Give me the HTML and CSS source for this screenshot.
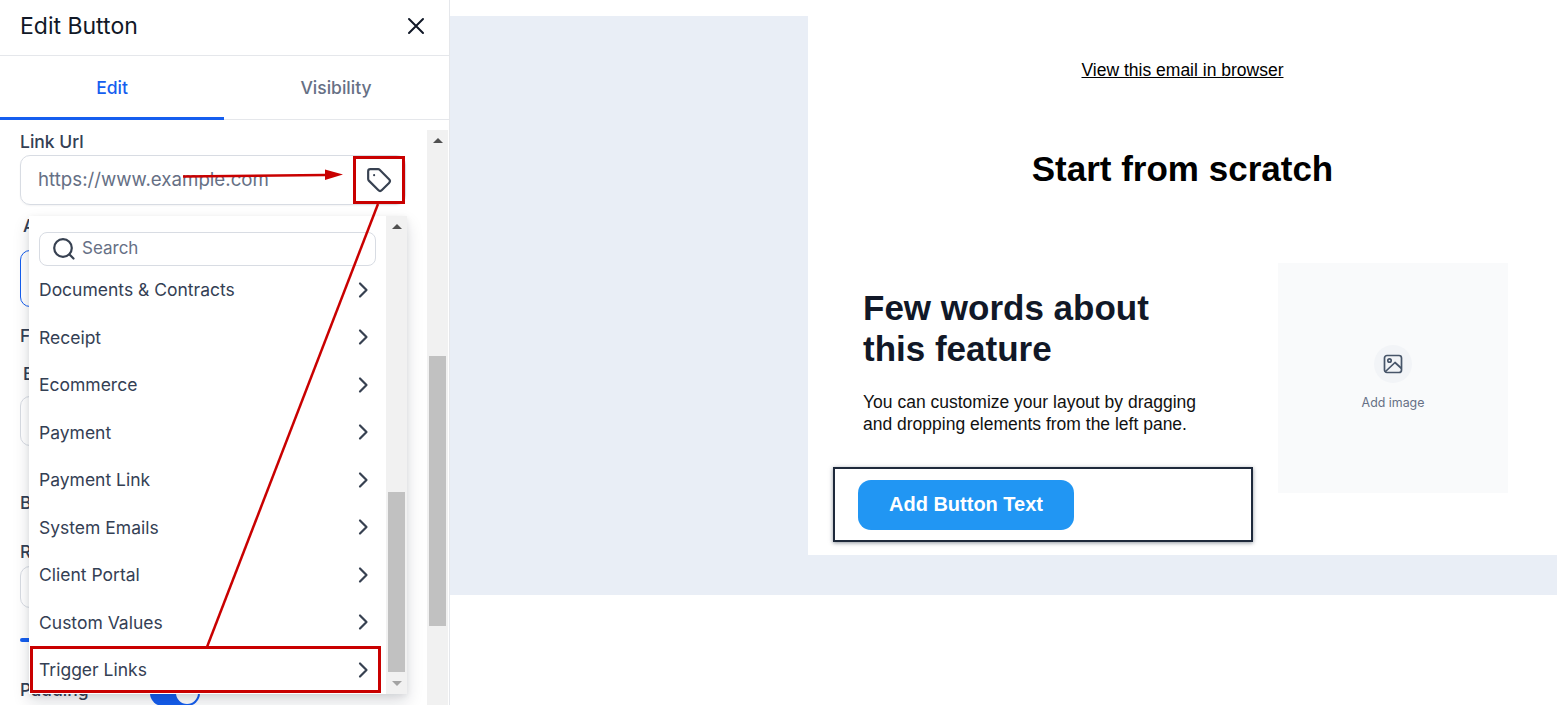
FILE: index.html
```html
<!DOCTYPE html>
<html lang="en">
<head>
<meta charset="utf-8">
<title>Edit Button</title>
<link rel="stylesheet" href="styles.css">
</head>
<body>
<div class="app">
  <aside class="panel">
    <header class="panel-head">
      <h1 class="panel-title">Edit Button</h1>
      <svg class="close" width="24" height="24" viewBox="0 0 24 24" fill="none" stroke="#111827" stroke-width="2" stroke-linecap="round"><path d="M5 5l14 14M19 5L5 19"/></svg>
    </header>
    <nav class="tabs">
      <div class="tab active">Edit</div>
      <div class="tab">Visibility</div>
    </nav>
    <div class="panel-body">
      <div class="form">
        <label class="label">Link Url</label>
        <div class="url-field">
          <span class="url-text">https://www.example.com</span>
          <span class="tag-cell">
            <svg width="26" height="26" viewBox="0 0 24 24" fill="none" stroke="#374151" stroke-width="2" stroke-linecap="round" stroke-linejoin="round"><path d="M12.586 2.586A2 2 0 0 0 11.172 2H4a2 2 0 0 0-2 2v7.172a2 2 0 0 0 .586 1.414l8.704 8.704a2.426 2.426 0 0 0 3.42 0l6.58-6.58a2.426 2.426 0 0 0 0-3.42z"/><circle cx="7.5" cy="7.5" r="1" fill="#374151" stroke="none"/></svg>
          </span>
        </div>
        <div class="ghost ghost-a">Action</div>
        <div class="ghost-box ghost-blue"></div>
        <div class="ghost ghost-f">Font</div>
        <div class="ghost ghost-e">Button</div>
        <div class="ghost-box ghost-input"></div>
        <div class="ghost ghost-b">Border</div>
        <div class="ghost ghost-r">Radius</div>
        <div class="ghost-box ghost-input2"></div>
        <div class="ghost-slider"></div>
        <div class="padding-row">
          <span class="ghost">Padding</span>
          <span class="toggle"><span class="knob"></span></span>
        </div>
      </div>
      <div class="scrollbar">
        <span class="arrow-up"></span>
        <span class="thumb"></span>
      </div>
    </div>
    <div class="menu">
      <div class="menu-list">
        <div class="search">
          <svg width="24" height="24" viewBox="0 0 24 24" fill="none" stroke="#374151" stroke-width="2.200" stroke-linecap="round"><circle cx="11" cy="11" r="8.800"/><path d="M21.500 21.500l-4-4"/></svg>
          <span class="search-text">Search</span>
        </div>
        <div class="item"><span>Documents &amp; Contracts</span><svg class="chev" width="24" height="24" viewBox="0 0 24 24" fill="none" stroke="#374151" stroke-width="2.200" stroke-linecap="round" stroke-linejoin="round"><path d="M9 5.500l6.500 6.500L9 18.500"/></svg></div>
        <div class="item"><span>Receipt</span><svg class="chev" width="24" height="24" viewBox="0 0 24 24" fill="none" stroke="#374151" stroke-width="2.200" stroke-linecap="round" stroke-linejoin="round"><path d="M9 5.500l6.500 6.500L9 18.500"/></svg></div>
        <div class="item"><span>Ecommerce</span><svg class="chev" width="24" height="24" viewBox="0 0 24 24" fill="none" stroke="#374151" stroke-width="2.200" stroke-linecap="round" stroke-linejoin="round"><path d="M9 5.500l6.500 6.500L9 18.500"/></svg></div>
        <div class="item"><span>Payment</span><svg class="chev" width="24" height="24" viewBox="0 0 24 24" fill="none" stroke="#374151" stroke-width="2.200" stroke-linecap="round" stroke-linejoin="round"><path d="M9 5.500l6.500 6.500L9 18.500"/></svg></div>
        <div class="item"><span>Payment Link</span><svg class="chev" width="24" height="24" viewBox="0 0 24 24" fill="none" stroke="#374151" stroke-width="2.200" stroke-linecap="round" stroke-linejoin="round"><path d="M9 5.500l6.500 6.500L9 18.500"/></svg></div>
        <div class="item"><span>System Emails</span><svg class="chev" width="24" height="24" viewBox="0 0 24 24" fill="none" stroke="#374151" stroke-width="2.200" stroke-linecap="round" stroke-linejoin="round"><path d="M9 5.500l6.500 6.500L9 18.500"/></svg></div>
        <div class="item"><span>Client Portal</span><svg class="chev" width="24" height="24" viewBox="0 0 24 24" fill="none" stroke="#374151" stroke-width="2.200" stroke-linecap="round" stroke-linejoin="round"><path d="M9 5.500l6.500 6.500L9 18.500"/></svg></div>
        <div class="item"><span>Custom Values</span><svg class="chev" width="24" height="24" viewBox="0 0 24 24" fill="none" stroke="#374151" stroke-width="2.200" stroke-linecap="round" stroke-linejoin="round"><path d="M9 5.500l6.500 6.500L9 18.500"/></svg></div>
        <div class="item"><span>Trigger Links</span><svg class="chev" width="24" height="24" viewBox="0 0 24 24" fill="none" stroke="#374151" stroke-width="2.200" stroke-linecap="round" stroke-linejoin="round"><path d="M9 5.500l6.500 6.500L9 18.500"/></svg></div>
      </div>
      <div class="menu-scroll">
        <span class="arrow-up"></span>
        <span class="menu-thumb"></span>
        <span class="arrow-down"></span>
      </div>
    </div>
  </aside>
  <main class="canvas">
    <div class="canvas-bg">
      <div class="email">
        <div class="view-link"><a href="#">View this email in browser</a></div>
        <h2 class="email-title">Start from scratch</h2>
        <div class="feature">
          <div class="feature-text">
            <h3 class="feature-title">Few words about this feature</h3>
            <p class="feature-copy">You can customize your layout by dragging and dropping elements from the left pane.</p>
            <div class="button-block"><span class="cta">Add Button Text</span></div>
          </div>
          <div class="image-slot">
            <span class="image-circle">
              <svg width="20" height="20" viewBox="0 0 20 20" fill="none" stroke="#475569" stroke-width="1.700" stroke-linejoin="round" stroke-linecap="round"><rect x="1.500" y="1.500" width="17" height="17" rx="2.500"/><circle cx="6.500" cy="6.500" r="1.700"/><path d="M2.500 17.500L12 8.500l6 5.500"/></svg>
            </span>
            <span class="image-label">Add image</span>
          </div>
        </div>
      </div>
    </div>
  </main>
  <svg class="annotations" width="1557" height="705" viewBox="0 0 1557 705" fill="none">
    <rect x="354.500" y="157.500" width="49" height="45" stroke="#c90000" stroke-width="3"/>
    <rect x="31.500" y="647.500" width="348" height="44" stroke="#c90000" stroke-width="3"/>
    <path d="M183 176.500L325 175" stroke="#c90000" stroke-width="2.500"/>
    <path d="M325 169.500L343 174.500L325 180z" fill="#c90000"/>
    <path d="M378 204L207 647" stroke="#c90000" stroke-width="2.500"/>
  </svg>
</div>
</body>
</html>
```
FILE: styles.css
```css
* { box-sizing: border-box; }
html, body { margin: 0; padding: 0; height: 100%; overflow: hidden; background: #fff; }
body { font-family: Inter, "Liberation Sans", sans-serif; }
.app { position: relative; display: flex; width: 1557px; height: 705px; overflow: hidden; }

.panel { position: relative; flex: 0 0 450px; height: 705px; border-right: 1px solid #e5e7eb; display: flex; flex-direction: column; background: #fff; }
.panel-head { flex: 0 0 56px; display: flex; align-items: center; justify-content: space-between; padding: 0 21px 4px 20px; border-bottom: 1px solid #e5e7eb; }
.panel-title { margin: 0; font-size: 23px; line-height: 28px; font-weight: 400; color: #111827; }
.tabs { flex: 0 0 64px; min-height: 0; display: flex; border-bottom: 1px solid #e5e7eb; }
.tab { flex: 0 0 224px; display: flex; align-items: center; justify-content: center; padding-bottom: 1px; font-size: 17.500px; font-weight: 500; color: #667085; }
.tab.active { color: #155eef; border-bottom: 3px solid #155eef; height: 64px; padding-top: 2px; }

.panel-body { flex: 1; position: relative; display: flex; min-height: 0; padding-top: 10px; }
.form { flex: 0 0 427px; padding: 2px 21px 0 20px; position: relative; }
.label { display: block; font-size: 17.500px; line-height: 20px; font-weight: 500; color: #344054; }
.url-field { display: flex; align-items: stretch; width: 386px; height: 50px; margin-top: 3px; border: 1px solid #d8dce3; border-radius: 10px; box-shadow: 0 1px 2px rgba(16,24,40,.05); }
.url-text { flex: 1; display: flex; align-items: center; padding: 0 0 2px 17px; font-size: 18.700px; color: #667085; }
.tag-cell { flex: 0 0 52px; display: flex; align-items: center; justify-content: center; padding-bottom: 1px; }

.ghost { position: absolute; left: 20px; font-size: 17.500px; line-height: 20px; font-weight: 500; color: #344054; white-space: nowrap; }
.ghost-a { top: 86px; left: 23px; }
.ghost-f { top: 196px; width: 9px; overflow: hidden; }
.ghost-e { top: 234px; left: 23px; width: 6px; overflow: hidden; }
.ghost-b { top: 363px; }
.ghost-r { top: 412px; }
.ghost-box { position: absolute; left: 20px; width: 386px; border: 1px solid #d8dce3; border-radius: 10px; }
.ghost-blue { top: 120px; height: 57px; border-color: #155eef; }
.ghost-input { top: 266px; height: 50px; }
.ghost-input2 { top: 436px; height: 42px; }
.ghost-slider { position: absolute; left: 20px; top: 508px; width: 386px; height: 4px; background: #155eef; border-radius: 2px; }
.padding-row { position: absolute; left: 0; top: 550px; }
.padding-row .ghost { left: 20px; top: 0; }
.toggle { position: absolute; left: 150px; top: 0; width: 50px; height: 26px; border-radius: 13px; background: #155eef; }
.knob { position: absolute; right: 2px; top: 2px; width: 22px; height: 22px; border-radius: 50%; background: #fff; }

.scrollbar { flex: 0 0 21px; background: #f1f1f1; position: relative; }
.arrow-up { position: absolute; top: 8px; left: 50%; margin-left: -5px; width: 0; height: 0; border-left: 5px solid transparent; border-right: 5px solid transparent; border-bottom: 5px solid #505050; }
.arrow-down { position: absolute; bottom: 8px; left: 50%; margin-left: -5px; width: 0; height: 0; border-left: 5px solid transparent; border-right: 5px solid transparent; border-top: 5px solid #a3a3a3; }
.thumb { position: absolute; top: 226px; left: 2px; width: 17px; height: 270px; background: #c1c1c1; }

.menu { position: absolute; left: 29px; top: 216px; width: 378px; height: 478px; display: flex; background: #fff; box-shadow: 0 8px 16px rgba(16,24,40,.14), 0 2px 6px rgba(16,24,40,.08); z-index: 2; }
.menu-list { flex: 0 0 357px; padding: 16px 0 0 10px; overflow: hidden; }
.search { display: flex; align-items: center; gap: 6px; width: 337px; height: 34px; padding-left: 12px; border: 1px solid #d8dce3; border-radius: 8px; font-size: 17px; color: #667085; }
.search-text { padding-bottom: 2px; }
.item { display: flex; align-items: center; justify-content: space-between; height: 47.500px; padding-right: 10px; font-size: 17.500px; color: #344054; }
.chev { margin-right: 1px; }
.menu-scroll { flex: 0 0 21px; background: #f1f1f1; position: relative; }
.menu-thumb { position: absolute; top: 276px; left: 2px; width: 17px; height: 180px; background: #c1c1c1; }

.canvas { flex: 1; min-width: 0; padding-top: 16px; background: #fff; }
.canvas-bg { background: #e9eef6; padding: 0 0 40px 358px; }
.email { background: #fff; height: 539px; font-family: "Liberation Sans", Arial, sans-serif; padding-top: 42px; }
.view-link { text-align: center; font-size: 17.500px; line-height: 24px; }
.view-link a { color: #000; }
.email-title { margin: 65px 0 0; text-align: center; font-size: 35px; line-height: 44px; font-weight: 700; color: #000; }
.feature { display: flex; margin-top: 72px; position: relative; }
.feature-text { flex: 0 0 470px; padding: 24px 0 0 55px; }
.feature-title { margin: 0; width: 320px; font-size: 35px; line-height: 41px; font-weight: 700; color: #111827; }
.feature-copy { margin: 22px 0 0; width: 350px; font-size: 17.500px; line-height: 22px; color: #111; }
.button-block { margin: 32px 0 0 -30px; width: 420px; height: 75px; border: 2px solid #1e293b; box-shadow: 0 1px 4px rgba(30,41,59,.5); padding: 11px 0 0 23px; background: #fff; }
.cta { display: inline-flex; align-items: center; justify-content: center; width: 216px; height: 50px; padding-bottom: 2px; border-radius: 13px; background: #2196f3; color: #fff; font-size: 20px; font-weight: 700; }
.image-slot { flex: 0 0 230px; height: 230px; background: #f9fafb; display: flex; flex-direction: column; align-items: center; justify-content: center; gap: 12px; }
.image-circle { width: 38px; height: 38px; border-radius: 50%; background: #f2f4f7; display: flex; align-items: center; justify-content: center; }
.image-label { font-family: Inter, sans-serif; font-size: 12.400px; line-height: 16px; color: #667085; }

.annotations { position: absolute; left: 0; top: 0; pointer-events: none; z-index: 5; }
```
